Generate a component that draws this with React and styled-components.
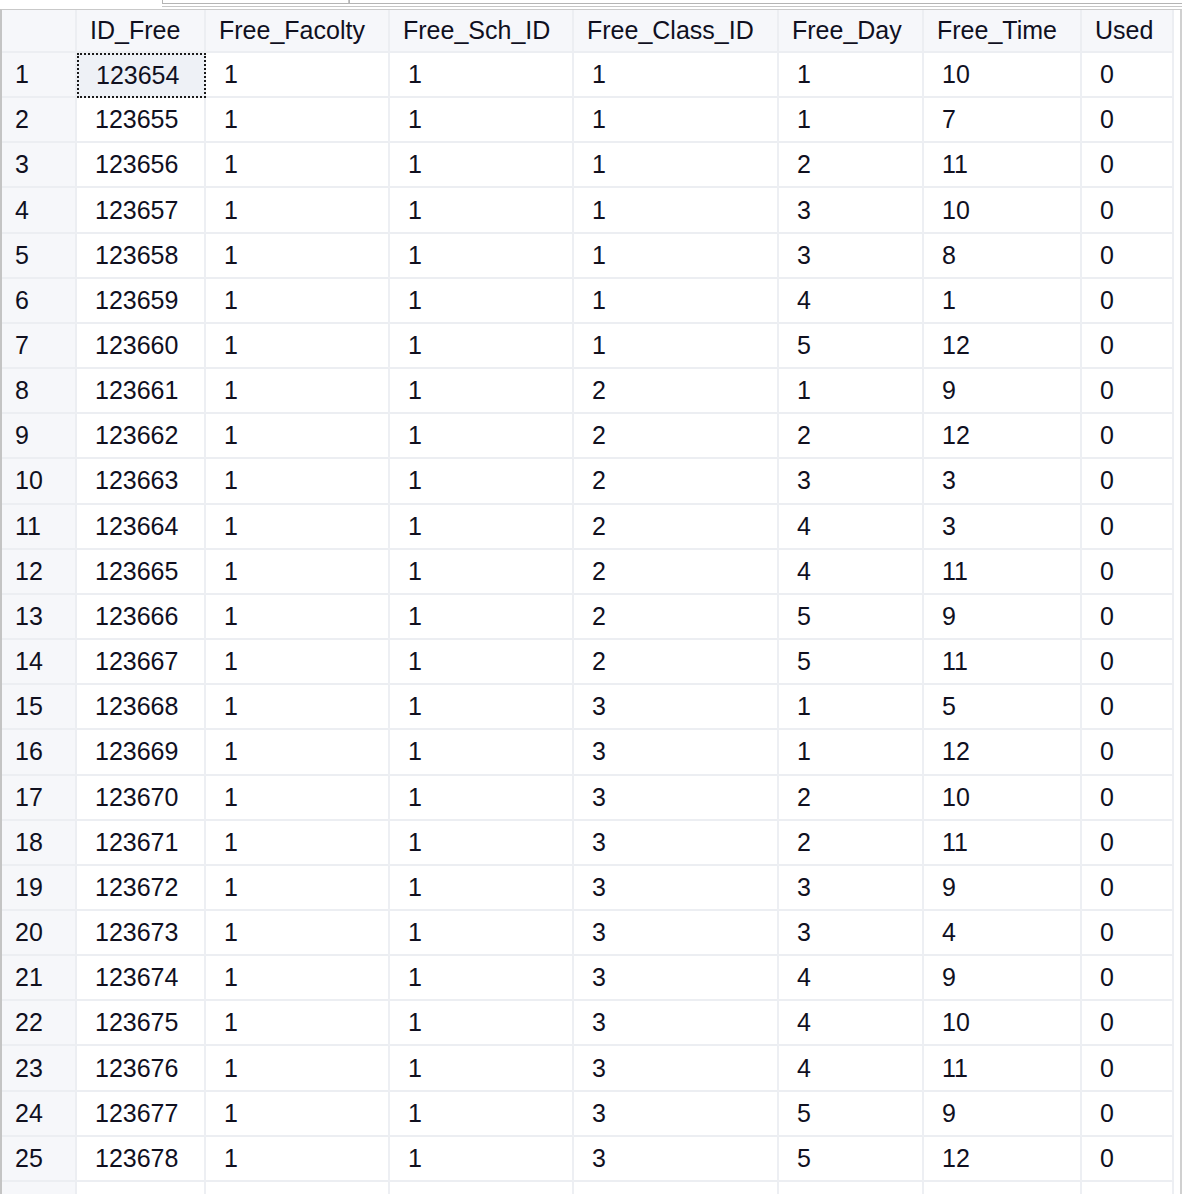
import React from 'react';
import styled, {createGlobalStyle} from 'styled-components';

const GlobalStyle = createGlobalStyle`
	html, body {
		margin: 0;
		padding: 0;
		background: #ffffff;
		overflow: hidden;
	}
	body {
		font-family: "Liberation Sans", Arial, sans-serif;
	}
`;

const COLUMNS = [
	{name: 'ID_Free', width: 129},
	{name: 'Free_Facolty', width: 184},
	{name: 'Free_Sch_ID', width: 184},
	{name: 'Free_Class_ID', width: 205},
	{name: 'Free_Day', width: 145},
	{name: 'Free_Time', width: 158},
	{name: 'Used', width: 92},
];

const ROWS = [
	[123654, 1, 1, 1, 1, 10, 0],
	[123655, 1, 1, 1, 1, 7, 0],
	[123656, 1, 1, 1, 2, 11, 0],
	[123657, 1, 1, 1, 3, 10, 0],
	[123658, 1, 1, 1, 3, 8, 0],
	[123659, 1, 1, 1, 4, 1, 0],
	[123660, 1, 1, 1, 5, 12, 0],
	[123661, 1, 1, 2, 1, 9, 0],
	[123662, 1, 1, 2, 2, 12, 0],
	[123663, 1, 1, 2, 3, 3, 0],
	[123664, 1, 1, 2, 4, 3, 0],
	[123665, 1, 1, 2, 4, 11, 0],
	[123666, 1, 1, 2, 5, 9, 0],
	[123667, 1, 1, 2, 5, 11, 0],
	[123668, 1, 1, 3, 1, 5, 0],
	[123669, 1, 1, 3, 1, 12, 0],
	[123670, 1, 1, 3, 2, 10, 0],
	[123671, 1, 1, 3, 2, 11, 0],
	[123672, 1, 1, 3, 3, 9, 0],
	[123673, 1, 1, 3, 3, 4, 0],
	[123674, 1, 1, 3, 4, 9, 0],
	[123675, 1, 1, 3, 4, 10, 0],
	[123676, 1, 1, 3, 4, 11, 0],
	[123677, 1, 1, 3, 5, 9, 0],
	[123678, 1, 1, 3, 5, 12, 0],
	['', '', '', '', '', '', ''],
];

const Page = styled.div`
	width: 1182px;
	height: 1194px;
	overflow: hidden;
	background: #ffffff;
	color: #10101f;
	font-size: 25px;
`;

const TopStrip = styled.div`
	height: 9px;
	display: flex;
`;

const TopSpacer = styled.div`
	width: 162px;
`;

const TabEdge = styled.div`
	flex: 1;
	display: flex;
	flex-direction: column;
`;

const TabLine = styled.div`
	height: 3px;
	display: flex;
	border-bottom: 1px solid #b4b4b4;
`;

const TabSegment = styled.div`
	width: ${(props) => props.$width}px;
	border-left: 1px solid #b4b4b4;
	border-right: ${(props) => (props.$last ? 'none' : '1px solid #c8c8c8')};
`;

const TabShadow = styled.div`
	margin-top: 2px;
	height: 1px;
	background: #c6c6c6;
`;

const Frame = styled.div`
	border-top: 1px solid #c9c9c9;
	border-left: 2px solid #c4c4c4;
	border-right: 2px solid #d0d0d0;
	width: 1178px;
	height: 1190px;
`;

const Grid = styled.div`
	display: grid;
	grid-template-columns: 75px ${COLUMNS.map((c) => c.width + 'px').join(' ')};
	grid-auto-rows: 45.17px;
	grid-template-rows: 43px;
	width: 1172px;
`;

const Cell = styled.div`
	display: flex;
	align-items: center;
	box-sizing: border-box;
	padding-left: ${(props) => props.$pad}px;
	border-right: 2px solid ${(props) => (props.$head ? '#eceef2' : '#edeff3')};
	border-bottom: 2px solid #eceef2;
	background: ${(props) => (props.$head ? '#f6f7fa' : '#ffffff')};
	white-space: nowrap;
	overflow: hidden;
`;

const Focused = styled(Cell)`
	background: #eef1f6;
	border: 2px dotted #1a1a1a;
	padding-left: 17px;
`;

export default function App() {
	return (
		<Page>
			<GlobalStyle/>
			<TopStrip>
				<TopSpacer/>
				<TabEdge>
					<TabLine>
						<TabSegment $width={185}/>
						<TabSegment $last/>
					</TabLine>
					<TabShadow/>
				</TabEdge>
			</TopStrip>
			<Frame>
				<Grid>
					<Cell $head $pad={12}/>
					{COLUMNS.map((c) => (
						<Cell key={c.name} $head $pad={13}>{c.name}</Cell>
					))}
					{ROWS.map((row, i) => (
						<React.Fragment key={i}>
							<Cell $head $pad={13}>{row[0] === '' ? '' : i + 1}</Cell>
							{row.map((v, j) => (
								i === 0 && j === 0
									? <Focused key={j}>{v}</Focused>
									: <Cell key={j} $pad={18}>{v}</Cell>
							))}
						</React.Fragment>
					))}
				</Grid>
			</Frame>
		</Page>
	);
}
